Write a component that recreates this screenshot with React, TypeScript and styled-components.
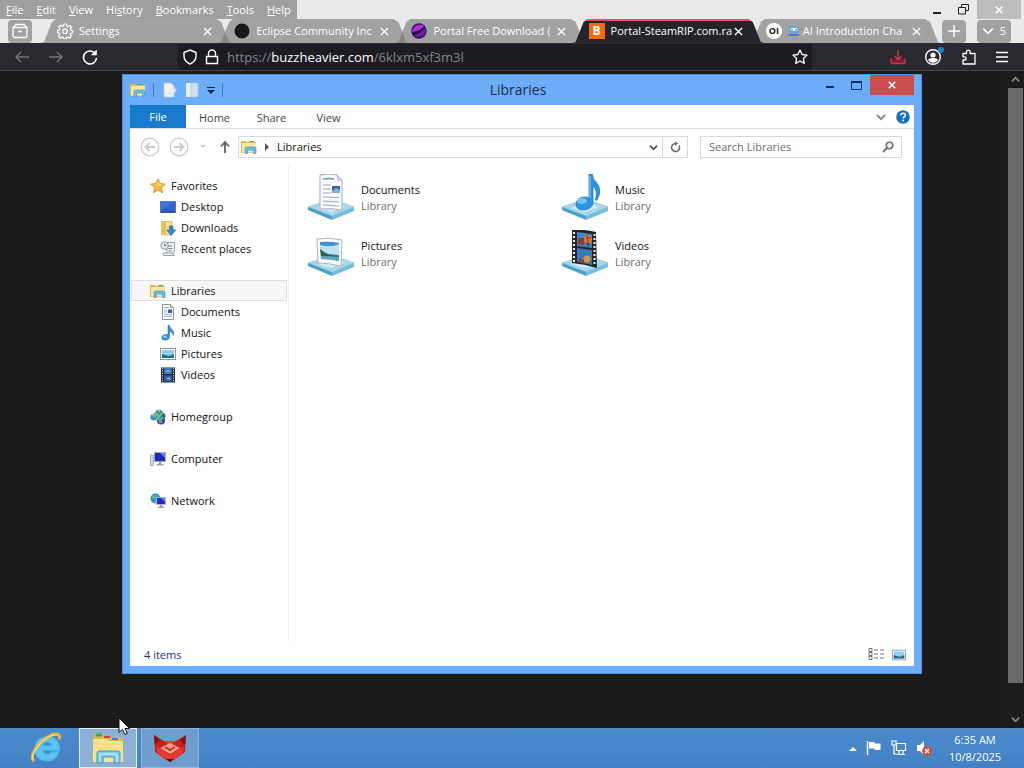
import React from "react";
import styled, { createGlobalStyle } from "styled-components";

const GlobalStyle = createGlobalStyle`
  *, *::before, *::after { box-sizing: border-box; }
  body { margin: 0; background: #1b1b1b; }
  body, button, input { font-family: "Open Sans", "Noto Sans", sans-serif; font-size: 11px; line-height: 16px; }
  button { padding: 0; border: 0; background: none; color: inherit; display: flex; align-items: center; justify-content: center; }
  a { color: inherit; text-decoration: none; }
  svg { display: block; flex: none; }
`;

const Desktop = styled.div`
  display: flex;
  flex-direction: column;
  min-height: 100vh;
`;

/* ---------- Browser ---------- */

const TopBar = styled.header`
  display: flex;
  justify-content: space-between;
  height: 19px;
  background: #eaeaea;
`;
const MenuBar = styled.nav`
  display: flex;
  align-items: center;
  gap: 13px;
  padding: 0 6px;
  background: #9f9f9f;
  color: #fff;
`;
const MenuItem = styled.button`
  height: 100%;
`;
const Mnemonic = styled.span`
  text-decoration: underline;
`;
const WindowButtons = styled.div`
  display: flex;
  padding-right: 3px;
`;
const WindowButton = styled.button<{ $w: number; $fill?: string }>`
  width: ${(p) => p.$w}px;
  height: 100%;
  background: ${(p) => p.$fill ?? "none"};
`;

const TabRow = styled.div`
  display: flex;
  align-items: center;
  height: 24px;
  padding: 0 13px 0 8px;
  background: #eaeaea;
`;
const GrayButton = styled.button<{ $w: number }>`
  width: ${(p) => p.$w}px;
  height: 23px;
  gap: 6px;
  border-radius: 4px;
  background: #a2a2a2;
  color: #fff;
`;
const TabTools = styled.div`
  display: flex;
  gap: 11px;
`;
const TabStrip = styled.div`
  display: flex;
  flex: 1;
  height: 100%;
  min-width: 0;
  margin: 0 15px 0 9px;
`;
const TabBox = styled.div<{ $active?: boolean }>`
  position: relative;
  z-index: ${(p) => (p.$active ? 1 : 0)};
  display: flex;
  flex: 1;
  align-items: center;
  min-width: 0;
  padding-left: 16px;
  color: #fff;
  &::before {
    content: "";
    position: absolute;
    z-index: -1;
    inset: 0 -14px 0 0;
    clip-path: polygon(0 100%, 3px 96%, 11px 12%, 15px 0, calc(100% - 16px) 0, calc(100% - 11px) 12%, calc(100% - 3px) 96%, 100% 100%);
    background: ${(p) => (p.$active ? "#25242b" : "rgba(120, 120, 120, 0.64)")};
    border-top: ${(p) => (p.$active ? "2px solid #e0526a" : "0")};
  }
`;
const TabLabel = styled.a`
  flex: 1;
  display: flex;
  align-items: center;
  gap: 3px;
  min-width: 0;
  margin-left: 6px;
  overflow: hidden;
  white-space: nowrap;
`;
const TabClose = styled.button`
  width: 14px;
  margin-right: 4px;
`;

const NavBar = styled.div`
  display: flex;
  align-items: center;
  height: 28px;
  padding: 0 14px;
  background: #2a2930;
  border-bottom: 1px solid #45454b;
  color: #fbfbfe;
`;
const NavGroup = styled.div<{ $gap: number }>`
  display: flex;
  align-items: center;
  gap: ${(p) => p.$gap}px;
`;
const UrlBar = styled.div`
  display: flex;
  flex: 1;
  align-items: center;
  gap: 6px;
  height: 26px;
  margin: 0 77px 0 80px;
  padding: 0 4px;
  background: #1d1c22;
  border-radius: 3px;
`;
const UrlText = styled.div`
  flex: 1;
  padding-left: 1px;
  font-size: 13px;
  color: #85848c;
`;
const UrlHost = styled.span`
  color: #fbfbfe;
`;

const Page = styled.main`
  position: relative;
  display: flex;
  flex: 1;
  justify-content: flex-end;
  min-height: 500px;
  background: #1b1b1b;
`;
const Scroller = styled.div`
  display: flex;
  flex-direction: column;
  align-items: center;
  width: 17px;
  background: #1c1c1c;
  color: #8a8a8a;
`;
const ScrollArrow = styled.button`
  width: 17px;
  height: 17px;
`;
const ScrollThumb = styled.div`
  flex: 1;
  width: 15px;
  margin-bottom: 28px;
  background: #6b6b6b;
`;

/* ---------- Explorer window ---------- */

const Explorer = styled.section`
  position: absolute;
  inset: 3px 102px 54px 122px;
  display: flex;
  flex-direction: column;
  padding: 0 7px 7px;
  background: #6badf8;
  border: 1px solid #4e8fda;
`;
const TitleBar = styled.header`
  display: grid;
  grid-template-columns: 1fr auto 1fr;
  height: 30px;
`;
const QuickAccess = styled.div`
  display: flex;
  align-items: center;
  gap: 7px;
`;
const Divider = styled.span`
  width: 1px;
  height: 14px;
  background: #3f78b8;
`;
const WindowTitle = styled.h1`
  margin: 0;
  padding-right: 8px;
  align-self: center;
  font-size: 14px;
  font-weight: 400;
  line-height: 20px;
  color: #1b2d4a;
`;
const Caption = styled.div`
  display: flex;
  justify-content: flex-end;
`;
const CaptionButton = styled.button<{ $w: number; $close?: boolean }>`
  width: ${(p) => p.$w}px;
  height: 20px;
  background: ${(p) => (p.$close ? "#c9504f" : "none")};
`;
const Client = styled.div`
  display: flex;
  flex: 1;
  flex-direction: column;
  min-height: 0;
  background: #fff;
`;
const Ribbon = styled.nav`
  display: flex;
  height: 24px;
  border-bottom: 1px solid #dadbdc;
  color: #444;
`;
const RibbonTab = styled.button<{ $file?: boolean }>`
  width: ${(p) => (p.$file ? 56 : 57)}px;
  padding-top: ${(p) => (p.$file ? 0 : 2)}px;
  background: ${(p) => (p.$file ? "#1979ca" : "none")};
  color: ${(p) => (p.$file ? "#fff" : "inherit")};
`;
const RibbonEnd = styled.div`
  display: flex;
  align-items: center;
  gap: 10px;
  margin-left: auto;
  padding-right: 4px;
`;
const AddressRow = styled.div`
  display: flex;
  align-items: center;
  height: 36px;
  padding: 0 12px 0 10px;
`;
const History = styled.div`
  display: flex;
  align-items: center;
  gap: 9px;
  width: 98px;
`;
const AddressBox = styled.div`
  display: flex;
  flex: 1;
  align-items: center;
  height: 22px;
  border: 1px solid #d9d9d9;
  color: #111;
`;
const Crumb = styled.a`
  display: flex;
  flex: 1;
  align-items: center;
  gap: 7px;
  padding-left: 2px;
`;
const BoxButton = styled.button<{ $split?: boolean }>`
  width: ${(p) => (p.$split ? 25 : 18)}px;
  height: 20px;
  border-left: ${(p) => (p.$split ? "1px solid #d9d9d9" : "0")};
`;
const SearchBox = styled.label`
  display: flex;
  align-items: center;
  width: 202px;
  height: 22px;
  margin-left: 12px;
  padding: 0 7px 0 8px;
  border: 1px solid #d9d9d9;
`;
const SearchInput = styled.input`
  flex: 1;
  min-width: 0;
  padding: 0;
  border: 0;
  outline: 0;
  background: none;
  &::placeholder { color: #6d6d6d; opacity: 1; }
`;
const Body = styled.div`
  display: flex;
  flex: 1;
  min-height: 0;
`;
const Tree = styled.nav`
  width: 159px;
  padding-top: 10px;
  border-right: 1px solid #f2f2f2;
`;
const TreeGroup = styled.div`
  margin-bottom: 21px;
`;
const TreeItem = styled.a<{ $child?: boolean; $selected?: boolean }>`
  display: flex;
  align-items: center;
  gap: 5px;
  height: 21px;
  margin: 0 1px;
  padding-left: ${(p) => (p.$child ? 29 : 19)}px;
  color: #111;
  background: ${(p) => (p.$selected ? "#f7f7f7" : "none")};
  box-shadow: ${(p) => (p.$selected ? "inset 0 0 0 1px #dedede" : "none")};
`;
const Items = styled.div`
  display: grid;
  flex: 1;
  grid-template-columns: repeat(auto-fill, 254px);
  grid-auto-rows: 56px;
  align-content: start;
  padding: 5px 0 0 18px;
`;
const Item = styled.a`
  display: flex;
  align-items: center;
  gap: 6px;
  color: #111;
`;
const ItemKind = styled.span`
  display: block;
  color: #6d6d6d;
`;
const StatusBar = styled.footer`
  display: flex;
  align-items: center;
  gap: 8px;
  height: 24px;
  padding: 1px 8px 0 14px;
  color: #1e3287;
`;
const Count = styled.span`
  flex: 1;
`;

/* ---------- Taskbar ---------- */

const Taskbar = styled.footer`
  display: flex;
  align-items: stretch;
  height: 40px;
  padding-left: 17px;
  background: linear-gradient(#4a8bcc, #4481c4);
  color: #fff;
`;
const TaskButton = styled.button<{ $state?: "open" | "focus" }>`
  width: 58px;
  margin-right: 4px;
  background: ${(p) => (p.$state === "focus" ? "#8db0d4" : p.$state === "open" ? "#6f9dce" : "none")};
  border: ${(p) => (p.$state === "focus" ? "1px solid #e6f0f8" : p.$state === "open" ? "1px solid #8fb6de" : "0")};
`;
const Tray = styled.div`
  display: flex;
  align-items: center;
  gap: 9px;
  margin-left: auto;
`;
const Clock = styled.time`
  width: 83px;
  padding-right: 15px;
  text-align: center;
  line-height: 17px;
`;
const Pointer = styled.svg`
  position: absolute;
  z-index: 5;
  left: 118px;
  bottom: -8px;
`;

/* ---------- Drawings ---------- */

const Cross = ({ s = 9, c = "#fff", w = 1.5 }: { s?: number; c?: string; w?: number }) => (
  <svg width={s} height={s} viewBox="0 0 10 10" stroke={c} strokeWidth={w} fill="none">
    <path d="M1 1l8 8M9 1l-8 8" />
  </svg>
);
const Chevron = ({ up, c = "currentColor", s = 9, w = 2 }: { up?: boolean; c?: string; s?: number; w?: number }) => (
  <svg width={s} height={s} viewBox="0 0 10 10" stroke={c} strokeWidth={w} fill="none">
    <path d={up ? "M1 7l4-4 4 4" : "M1 3l4 4 4-4"} />
  </svg>
);
const Arrow = ({ right }: { right?: boolean }) => (
  <svg width="16" height="16" viewBox="0 0 16 16" stroke="#77767d" strokeWidth="1.4" fill="none">
    <path d={right ? "M1 8h13M9 3l5 5-5 5" : "M15 8H2M7 3L2 8l5 5"} />
  </svg>
);
const RoundArrow = ({ right }: { right?: boolean }) => (
  <svg width="20" height="20" viewBox="0 0 20 20" stroke="#cbcbcb" fill="none">
    <circle cx="10" cy="10" r="8.800" strokeWidth="1.200" />
    <path strokeWidth="2" d={right ? "M5 10h9M10.500 6l4 4-4 4" : "M15 10H6M9.500 6l-4 4 4 4"} />
  </svg>
);
const Gear = () => (
  <svg width="16" height="16" viewBox="0 0 16 16" fill="none" stroke="#fff" strokeWidth="1.200" strokeLinejoin="round">
    <path d="M6.700 1h2.600l.4 2 1.300.6 1.800-1.200 1.800 1.800-1.200 1.800.6 1.300 1.500.3v2.300l-1.700.4-.6 1.300 1.200 1.700-1.800 1.800-1.700-1.100-1.300.5-.4 1.500H6.800l-.4-1.500-1.300-.5-1.700 1.100-1.800-1.800 1.100-1.700-.5-1.300L.6 9.700V7.300l1.700-.3.5-1.300-1.200-1.700 1.800-1.800 1.800 1.200 1.200-.5z" />
    <circle cx="8" cy="8.200" r="2.300" />
  </svg>
);
const DarkBall = () => (
  <svg width="16" height="16" viewBox="0 0 16 16"><circle cx="8" cy="8" r="7.500" fill="#191919" /></svg>
);
const PurpleBall = () => (
  <svg width="16" height="16" viewBox="0 0 16 16">
    <circle cx="8" cy="8" r="7.700" fill="#3a1060" />
    <path d="M1 9C2 3 8 0 13 3c1 1-4 5-12 6z" fill="#b32fd0" />
    <path d="M2 12c5 0 9-3 12-7 3 6-4 12-12 7z" fill="#6d1f9c" />
    <path d="M1.500 11Q8 10 13.500 4" stroke="#1c0633" strokeWidth="1.500" fill="none" />
  </svg>
);
const BadgeB = styled.span`
  width: 16px;
  height: 16px;
  background: #f26a12;
  color: #fff;
  font-size: 12px;
  font-weight: 700;
  text-align: center;
`;
const BadgeOI = styled.span`
  width: 16px;
  height: 16px;
  border-radius: 8px;
  background: #fff;
  color: #111;
  font-size: 9px;
  font-weight: 700;
  text-align: center;
`;
const Robot = () => (
  <svg width="12" height="12" viewBox="0 0 12 12">
    <rect x="1" y="1" width="10" height="7" rx="2" fill="#5fa5e2" />
    <rect x="2.500" y="3" width="7" height="3" rx="1" fill="#e8f4ff" />
    <path d="M4 4v1.500M8 4v1.500" stroke="#2a5688" />
    <path d="M1 10h10" stroke="#3f84cc" strokeWidth="2" />
  </svg>
);

const LibraryFolder = () => (
  <svg width="16" height="16" viewBox="0 0 16 16">
    <path d="M0 2h5l1 1h9v11H0z" fill="#dfb852" />
    <path d="M1 4h14v9.500H1z" fill="#f7e79f" />
    <path d="M8 2.500h5" stroke="#5ba85a" />
    <path d="M4 14.500V9.500q0-1.500 1.500-1.500h8q1.500 0 1.500 1.500v5h-2.500V11H6.500v3.500z" fill="#6cc0e4" stroke="#3c8fbc" strokeWidth=".6" />
  </svg>
);
const Star = () => (
  <svg width="16" height="16" viewBox="0 0 16 16">
    <path d="M8 .8l2.200 4.700 5.200.6-3.900 3.500 1.100 5.200L8 12.200l-4.600 2.600 1.100-5.200L.6 6.100l5.200-.6z" fill="#fbbb3c" stroke="#dd8a1c" strokeWidth=".8" />
    <path d="M8 3l1.400 3.300 3 .3L8 8z" fill="#ffe08a" />
  </svg>
);
const DesktopIcon = () => (
  <svg width="16" height="16" viewBox="0 0 16 16">
    <rect x=".5" y="2.500" width="15" height="11" fill="#2f62cf" stroke="#5a78b4" />
    <path d="M1 3h14L1 11z" fill="#3f74dc" />
    <path d="M1 13h14" stroke="#1b3478" />
  </svg>
);
const DownloadsIcon = () => (
  <svg width="16" height="16" viewBox="0 0 16 16">
    <path d="M1 1h5l1 1v13H1z" fill="#e9c559" />
    <path d="M5 1.500h7V15H5z" fill="#f6dd86" stroke="#cda63e" strokeWidth=".6" />
    <path d="M9.500 6h3.500v4h2.800L11.200 15.500 6.700 10h2.800z" fill="#2d8be0" stroke="#1b63ae" strokeWidth=".6" />
  </svg>
);
const RecentIcon = () => (
  <svg width="16" height="16" viewBox="0 0 16 16" fill="#eef2f2" stroke="#8b9b9b" strokeWidth=".9">
    <path d="M5 1.500h9.500V11H13v3H7V8H5z" />
    <path d="M3 12h9q1 2.500 2.500 2.500H4Q2.500 14 3 12z" />
    <circle cx="4.500" cy="4.500" r="3.800" fill="#d9ecdf" />
    <path d="M4.500 2.500v2h2M8 5h4M8.500 7.500h4M8.500 10h3" fill="none" stroke="#5c7a80" />
  </svg>
);
const DocIcon = () => (
  <svg width="16" height="16" viewBox="0 0 16 16">
    <path d="M2.500.5h8l3 3v12h-11z" fill="#fff" stroke="#8a9399" />
    <path d="M10.500.5v3h3" fill="#e3e7ea" stroke="#8a9399" />
    <path d="M4 3.500h5M4 6h3M4 8h3M4 10.500h8M4 12.500h8" stroke="#8fb0cc" />
    <rect x="8" y="5.500" width="4" height="3.500" fill="#2f5f9e" />
  </svg>
);
const MusicIcon = () => (
  <svg width="16" height="16" viewBox="0 0 16 16">
    <path d="M8 .5h1.500q.5 2.500 2.500 4 2.800 2.500 1.200 6-.3-3-3.700-4.500v6q-.3 3-4 3.200-3.700 0-3.800-2.500.3-3 4-3.200H8z" fill="#2f97dc" stroke="#1766a8" strokeWidth=".5" />
    <ellipse cx="5" cy="11.800" rx="2" ry="1.200" fill="#7fcbf5" />
  </svg>
);
const PictureIcon = ({ w = 16 }: { w?: number }) => (
  <svg width={w} height={w} viewBox="0 0 16 16">
    <rect x=".5" y="2.500" width="15" height="11" fill="#fff" stroke="#8d979d" />
    <rect x="2" y="4" width="12" height="8" fill="#8fd0ee" />
    <path d="M2 8l3 1 4 1 5-2v4H2z" fill="#236d86" />
  </svg>
);
const VideoIcon = () => (
  <svg width="16" height="16" viewBox="0 0 16 16">
    <rect x="1" y=".5" width="14" height="15" fill="#232a36" />
    <path d="M2.500 1v14M13.500 1v14" stroke="#d5dde4" strokeDasharray="1.200 1.200" />
    <rect x="4" y="1" width="8" height="6" fill="#3d76bd" />
    <rect x="4" y="8.500" width="8" height="6" fill="#2c60a2" />
    <path d="M6 5l2-3 2 3zM6 12l3-2 2 3z" fill="#8ab4df" />
  </svg>
);
const HomegroupIcon = () => (
  <svg width="16" height="16" viewBox="0 0 16 16">
    <circle cx="4" cy="8" r="3.600" fill="#4a86c6" />
    <circle cx="9" cy="4.500" r="3.800" fill="#3c8f86" />
    <circle cx="12.500" cy="7" r="3" fill="#2f5cc4" />
    <circle cx="11" cy="11.500" r="4" fill="#33489e" />
    <path d="M3 8l4-3 2 3 4-5M6 9l4 2 3-3" stroke="#63c07c" fill="none" strokeWidth="2.200" />
    <path d="M2 6l2-1M8 2l2 0M9 13l3 0" stroke="#cfe6fa" />
  </svg>
);
const ComputerIcon = () => (
  <svg width="16" height="16" viewBox="0 0 16 16">
    <rect x=".5" y="4" width="3" height="10.500" fill="#d5dbe0" stroke="#8b959d" strokeWidth=".7" />
    <rect x="4.500" y="1.500" width="11" height="9" fill="#1e2bb2" stroke="#a2aac8" />
    <path d="M10 2h5v5z" fill="#6d7ff0" />
    <path d="M8.500 11h3v2h2v1.500h-7V13h2z" fill="#9aa2b2" />
  </svg>
);
const NetworkIcon = () => (
  <svg width="16" height="16" viewBox="0 0 16 16">
    <circle cx="5.500" cy="5.500" r="5" fill="#2f8fc6" />
    <path d="M2 3q3-2 5-1L5 5 2 6zM3 8l4 0-1 2z" fill="#58c07c" />
    <rect x="6.500" y="4.500" width="9" height="7" fill="#1c2fbe" stroke="#a9b6de" />
    <path d="M11 5h4v4z" fill="#6485f0" />
    <path d="M10 12h2v1.500h2V15H8v-1.500h2z" fill="#98a2b6" />
  </svg>
);

const LibraryArt = ({ children }: { children: React.ReactNode }) => (
  <svg width="48" height="48" viewBox="0 3 48 48">
    <path d="M1 36L25 28l22 8-22 9z" fill="#a9d7ea" stroke="#7fbfdb" strokeWidth=".6" />
    <path d="M1 36l24 9v4L1 39z" fill="#4c9fc8" />
    <path d="M47 36l-22 9v4l22-9z" fill="#74bcdb" />
    <path d="M10 37l16-5 12 4-14 5z" fill="#d2ecf6" />
    {children}
  </svg>
);
const BigDoc = () => (
  <LibraryArt>
    <path d="M13 4q9-2 17 0l5 5v30q-11-2-22-1z" fill="#f8f9fc" stroke="#a9abc0" />
    <path d="M30 4l1 6 4-1z" fill="#d3d6e2" stroke="#a9abc0" strokeWidth=".5" />
    <path d="M16 8q6-1 11 0" stroke="#5fa29a" strokeWidth="1.500" fill="none" />
    <path d="M16 14h8M16 18h8M16 22h8M16 26l16 .5M16 30l16 1M16 34l16 1" stroke="#a3a6b8" />
    <rect x="25" y="15" width="8" height="7" fill="#3d6595" />
    <path d="M25 20l4-3 4 2v3h-8z" fill="#7fb0d8" />
  </LibraryArt>
);
const BigMusic = () => (
  <LibraryArt>
    <path d="M28 3h3.500q0 5 3.500 8 7 8 1 18-1 1-1.500 0Q37 19 32 15v17q-1 6-9 7-8 0-8-6 1-7 9-7 3 0 4 1z" fill="#2e94e2" stroke="#1b6fbc" strokeWidth=".7" />
    <ellipse cx="21" cy="30" rx="5" ry="3" fill="#74c3f5" />
    <path d="M29 5v22" stroke="#8dd0fa" />
  </LibraryArt>
);
const BigPicture = () => (
  <LibraryArt>
    <path d="M10 12q12-2 25 1l-1 26q-12-3-23-3z" fill="#fafcfd" stroke="#a9b4bc" />
    <path d="M13 15q10-1 19 1v18q-9-2-18-2z" fill="#3f8fd3" />
    <path d="M13 18q10 3 19-1v11l-18-2z" fill="#bfe3f4" />
    <path d="M13 22q5 4 10 6l9 1v1q-10 1-18-1z" fill="#2c6444" />
    <path d="M14 29q9 0 18 1v4q-9-2-18-2z" fill="#5aa6c4" />
  </LibraryArt>
);
const BigVideo = () => (
  <LibraryArt>
    <path d="M11 3q12-1 24 2l1 36q-13-4-25-5z" fill="#272523" />
    <path d="M13 5v30M33.500 7v32" stroke="#eef1f3" strokeWidth="2" strokeDasharray="2 2" />
    <path d="M16 5l15 2v14l-15-2z" fill="#3f83c8" />
    <path d="M16 21l15 2v15l-15-3z" fill="#3578c0" />
    <path d="M17 11h6v7l-6-1z" fill="#93392f" />
    <circle cx="27" cy="12" r="4" fill="#df7a2c" />
    <path d="M25 11h5M26 8l1 8" stroke="#7b3a2a" />
    <path d="M25 16h4l-1 3h-2z" fill="#7b3a2a" />
    <circle cx="26" cy="32" r="3.500" fill="#d99a34" />
    <path d="M18 32l5 1v3l-5-1z" fill="#a4352b" />
  </LibraryArt>
);

/* ---------- Content ---------- */

const menu = [
  ["", "F", "ile"], ["", "E", "dit"], ["", "V", "iew"], ["Hi", "s", "tory"],
  ["", "B", "ookmarks"], ["", "T", "ools"], ["", "H", "elp"],
];
const tabs = [
  { icon: <Gear />, text: "Settings" },
  { icon: <DarkBall />, text: "Eclipse Community Inc" },
  { icon: <PurpleBall />, text: "Portal Free Download (" },
  { icon: <BadgeB>B</BadgeB>, text: "Portal-SteamRIP.com.ra", active: true },
  { icon: <BadgeOI>OI</BadgeOI>, text: "AI Introduction Cha", extra: <Robot /> },
];
const tree = [
  { icon: <Star />, text: "Favorites", children: [
    { icon: <DesktopIcon />, text: "Desktop" },
    { icon: <DownloadsIcon />, text: "Downloads" },
    { icon: <RecentIcon />, text: "Recent places" },
  ] },
  { icon: <LibraryFolder />, text: "Libraries", selected: true, children: [
    { icon: <DocIcon />, text: "Documents" },
    { icon: <MusicIcon />, text: "Music" },
    { icon: <PictureIcon />, text: "Pictures" },
    { icon: <VideoIcon />, text: "Videos" },
  ] },
  { icon: <HomegroupIcon />, text: "Homegroup", children: [] },
  { icon: <ComputerIcon />, text: "Computer", children: [] },
  { icon: <NetworkIcon />, text: "Network", children: [] },
];
const libraries = [
  { icon: <BigDoc />, text: "Documents" },
  { icon: <BigMusic />, text: "Music" },
  { icon: <BigPicture />, text: "Pictures" },
  { icon: <BigVideo />, text: "Videos" },
];

function BrowserChrome() {
  return (
    <>
      <TopBar>
        <MenuBar aria-label="Menu">
          {menu.map(([pre, key, post]) => (
            <MenuItem key={key + post}><span>{pre}<Mnemonic>{key}</Mnemonic>{post}</span></MenuItem>
          ))}
        </MenuBar>
        <WindowButtons>
          <WindowButton $w={26} aria-label="Minimize">
            <svg width="10" height="10"><path d="M1 8h8" stroke="#222" strokeWidth="2" /></svg>
          </WindowButton>
          <WindowButton $w={27} aria-label="Restore">
            <svg width="11" height="11" fill="none" stroke="#222"><path d="M3.500 3V.5h7v6H8M.5 3.500h7v6.500h-7z" /></svg>
          </WindowButton>
          <WindowButton $w={44} $fill="#bdbdbd" aria-label="Close"><Cross s={8} w={2} /></WindowButton>
        </WindowButtons>
      </TopBar>
      <TabRow>
        <GrayButton $w={24} aria-label="Recent tabs">
          <svg width="16" height="16" viewBox="0 0 16 16" fill="none" stroke="#fff" strokeWidth="1.300">
            <path d="M3 1.500h10M1 4.500h14v8q0 2-2 2H3q-2 0-2-2zM1 6l2-4M15 6l-2-4M6 8.500h4" />
          </svg>
        </GrayButton>
        <TabStrip>
          {tabs.map((t) => (
            <TabBox key={t.text} $active={t.active}>
              {t.icon}
              <TabLabel href="#">{t.extra}{t.text}</TabLabel>
              <TabClose aria-label="Close tab"><Cross /></TabClose>
            </TabBox>
          ))}
        </TabStrip>
        <TabTools>
          <GrayButton $w={24} aria-label="New tab">
            <svg width="12" height="12" stroke="#fff" strokeWidth="1.500"><path d="M6 0v12M0 6h12" /></svg>
          </GrayButton>
          <GrayButton $w={34}><Chevron s={12} w={1.3} />5</GrayButton>
        </TabTools>
      </TabRow>
      <NavBar>
        <NavGroup $gap={18}>
          <button aria-label="Back"><Arrow /></button>
          <button aria-label="Forward"><Arrow right /></button>
          <button aria-label="Reload">
            <svg width="16" height="16" viewBox="0 0 16 16" fill="none" stroke="#fff" strokeWidth="1.600">
              <path d="M13.500 5A6.500 6.500 0 1 0 14.500 9" /><path d="M14.500 1v5h-5z" fill="#fff" strokeWidth=".6" />
            </svg>
          </button>
        </NavGroup>
        <UrlBar>
          <svg width="16" height="16" viewBox="0 0 16 16" fill="none" stroke="#fff" strokeWidth="1.400">
            <path d="M8 1l6 2.500v3.500c0 4-2.500 6.500-6 8-3.500-1.500-6-4-6-8V3.500z" />
          </svg>
          <svg width="16" height="16" viewBox="0 0 16 16" fill="none" stroke="#fff" strokeWidth="1.400">
            <path d="M2.500 7.500h11v7h-11zM4.500 7V4.500a3.500 3.500 0 0 1 7 0V7" />
          </svg>
          <UrlText role="textbox" aria-label="Address" tabIndex={0}>https://<UrlHost>buzzheavier.com</UrlHost>/6klxm5xf3m3l</UrlText>
          <button aria-label="Bookmark">
            <svg width="16" height="16" viewBox="0 0 16 16" fill="none" stroke="#fff" strokeWidth="1.300" strokeLinejoin="round">
              <path d="M8 1l2.100 4.500 4.900.6-3.600 3.400.9 4.900L8 12l-4.300 2.400.9-4.900L1 6.100l4.900-.6z" />
            </svg>
          </button>
        </UrlBar>
        <NavGroup $gap={17}>
          <button aria-label="Downloads">
            <svg width="18" height="16" viewBox="0 0 18 16" fill="none" stroke="#c7374f" strokeWidth="1.400">
              <path d="M3 9.500h12v4.500H3z" fill="#7a1f33" stroke="none" />
              <path d="M9 1v9M5.500 7L9 10.500 12.500 7M2 9v4q0 1.500 1.500 1.500h11Q16 14.500 16 13V9" />
            </svg>
          </button>
          <button aria-label="Account">
            <svg width="20" height="20" viewBox="0 0 20 20">
              <circle cx="9" cy="10" r="7.300" fill="none" stroke="#fff" strokeWidth="1.400" />
              <circle cx="9" cy="8" r="2.600" fill="#fff" /><path d="M4 13q1-2 5-2t5 2q-2 3-5 3t-5-3z" fill="#fff" />
              <circle cx="17" cy="3" r="3" fill="#1187d8" />
            </svg>
          </button>
          <button aria-label="Extensions">
            <svg width="16" height="16" viewBox="0 0 16 16" fill="none" stroke="#fff" strokeWidth="1.300" strokeLinejoin="round">
              <path d="M2 4.500h3.500V3a1.800 1.800 0 0 1 3.600 0v1.500H14V15H2v-4h1.500a1.600 1.600 0 0 0 0-3.200H2z" />
            </svg>
          </button>
          <button aria-label="Application menu">
            <svg width="16" height="16" stroke="#fff" strokeWidth="1.300"><path d="M2 3.500h12M2 8h12M2 12.500h12" /></svg>
          </button>
        </NavGroup>
      </NavBar>
    </>
  );
}

function ExplorerWindow() {
  return (
    <Explorer aria-label="Libraries">
      <TitleBar>
        <QuickAccess>
          <LibraryFolder />
          <Divider />
          <svg width="16" height="16" viewBox="0 0 16 16">
            <path d="M3 1h7l3 3v11H3z" fill="#edf3f8" stroke="#b7c8da" strokeWidth=".7" />
            <path d="M7 10l3 3 5-6" stroke="#dde7f2" strokeWidth="2.500" fill="none" />
          </svg>
          <svg width="16" height="16" viewBox="0 0 16 16">
            <path d="M2 1h5v14H2z" fill="#e7eef4" /><path d="M7 1h7v14H7z" fill="#cfdfee" stroke="#a9c3dd" strokeWidth=".6" />
          </svg>
          <svg width="8" height="8"><path d="M0 1.500h8" stroke="#10254b" /><path d="M0 4h8l-4 4z" fill="#10254b" /></svg>
          <Divider />
        </QuickAccess>
        <WindowTitle>Libraries</WindowTitle>
        <Caption>
          <CaptionButton $w={26} aria-label="Minimize"><svg width="8" height="8"><path d="M0 6h8" stroke="#0c2c5c" strokeWidth="2" /></svg></CaptionButton>
          <CaptionButton $w={27} aria-label="Maximize"><svg width="11" height="9"><path d="M.5 1v7.500h10V1" fill="none" stroke="#0c2c5c" /><path d="M0 1h11" stroke="#0c2c5c" strokeWidth="2" /></svg></CaptionButton>
          <CaptionButton $w={44} $close aria-label="Close"><Cross s={8} w={2} /></CaptionButton>
        </Caption>
      </TitleBar>
      <Client>
        <Ribbon>
          <RibbonTab $file>File</RibbonTab>
          <RibbonTab>Home</RibbonTab>
          <RibbonTab>Share</RibbonTab>
          <RibbonTab>View</RibbonTab>
          <RibbonEnd>
            <button aria-label="Expand the ribbon"><Chevron c="#8a8a8a" s={10} /></button>
            <button aria-label="Help">
              <svg width="14" height="14" viewBox="0 0 14 14">
                <circle cx="7" cy="7" r="6.800" fill="#1b6fc0" />
                <path d="M4.800 5.400q0-2.200 2.300-2.200t2.300 2q0 1-1.300 1.800-1 .6-1 1.500" stroke="#fff" strokeWidth="1.500" fill="none" />
                <circle cx="7.100" cy="10.600" r="1" fill="#fff" />
              </svg>
            </button>
          </RibbonEnd>
        </Ribbon>
        <AddressRow>
          <History>
            <button aria-label="Back"><RoundArrow /></button>
            <button aria-label="Forward"><RoundArrow right /></button>
            <svg width="10" height="6"><path d="M2 1h6L5 4z" fill="#cfcfcf" /></svg>
            <button aria-label="Up">
              <svg width="14" height="14" viewBox="0 0 14 14" fill="none" stroke="#606060" strokeWidth="1.800"><path d="M8 13V2M4 6.500l4-4.500 4 4.500" /></svg>
            </button>
          </History>
          <AddressBox>
            <Crumb href="#">
              <LibraryFolder />
              <svg width="6" height="8"><path d="M1 0l4 4-4 4z" fill="#555" /></svg>
              Libraries
            </Crumb>
            <BoxButton aria-label="Previous locations"><Chevron c="#555" /></BoxButton>
            <BoxButton $split aria-label="Refresh">
              <svg width="11" height="12" viewBox="0 0 11 12" fill="none" stroke="#6b6b6b" strokeWidth="1.600"><path d="M9 4.500A4 4 0 1 1 5.500 2.500" /><path d="M5 0l3 2.500L5 5z" fill="#6b6b6b" stroke="none" /></svg>
            </BoxButton>
          </AddressBox>
          <SearchBox>
            <SearchInput type="search" aria-label="Search Libraries" placeholder="Search Libraries" />
            <svg width="12" height="12" fill="none" stroke="#707070"><circle cx="7.500" cy="4.500" r="3.200" strokeWidth="1.600" /><path d="M5 7l-4 4" strokeWidth="2" /></svg>
          </SearchBox>
        </AddressRow>
        <Body>
          <Tree>
            {tree.map((g) => (
              <TreeGroup key={g.text}>
                <TreeItem href="#" $selected={g.selected}>{g.icon}{g.text}</TreeItem>
                {g.children.map((c) => (
                  <TreeItem href="#" key={c.text} $child>{c.icon}{c.text}</TreeItem>
                ))}
              </TreeGroup>
            ))}
          </Tree>
          <Items>
            {libraries.map((l) => (
              <Item href="#" key={l.text}>{l.icon}<span>{l.text}<ItemKind>Library</ItemKind></span></Item>
            ))}
          </Items>
        </Body>
        <StatusBar>
          <Count>4 items</Count>
          <button aria-label="Details view">
            <svg width="16" height="13" fill="none" stroke="#6f7680"><path d="M1 .5h3v3H1zM1 4.500h3v3H1zM1 8.500h3v3H1z" /><path d="M6 2h4M12 2h4M6 6h4M12 6h4M6 10h4M12 10h4" /></svg>
          </button>
          <button aria-label="Large icons view"><PictureIcon w={14} /></button>
        </StatusBar>
      </Client>
    </Explorer>
  );
}

function WindowsTaskbar() {
  return (
    <Taskbar>
      <TaskButton aria-label="Internet Explorer">
        <svg width="32" height="32" viewBox="0 0 32 32" fill="none">
          <path fillRule="evenodd" fill="#5cc4f0" stroke="#4fbdee" strokeWidth="1.400" d="M17.500 5c7.500 0 12 5 12 13H12.500c.4 3 2.500 4.500 5 4.500 2 0 3.600-.8 4.500-2.500h6.500c-1.500 5.500-6 8.500-11.500 8.500C10 28.500 5 24 5 17S10 5 17.500 5zM12.500 14h9.500c-.3-2.700-2-4.200-4.700-4.200s-4.500 1.500-4.800 4.200z" />
          <path d="M7.500 15Q9 8 17 7" stroke="#c3effd" strokeWidth="2" />
          <path d="M4 29.500Q-1 25 8 13.500 20 0 28.500 2.500q2 1.500.5 5" stroke="#e5b233" strokeWidth="3" />
          <path d="M3.500 28.500Q0 24 8.500 13.500 19 1.500 28 3" stroke="#fbe07a" strokeWidth="1.200" />
        </svg>
      </TaskButton>
      <TaskButton $state="focus" aria-label="File Explorer">
        <svg width="34" height="32" viewBox="0 0 34 32">
          <path d="M2 4l2-2h8l2 3h18v22H2z" fill="#dcb64e" />
          <path d="M5 3h6" stroke="#45a455" strokeWidth="3" /><path d="M13 5h6" stroke="#cf3e3e" strokeWidth="2" /><path d="M21 7h6" stroke="#3a80cf" strokeWidth="2" />
          <path d="M2 7h14l2 2h14v21H2z" fill="#f6e48f" />
          <path d="M2 12h30M2 16h30" stroke="#eed77a" />
          <path d="M6 31V21q0-2 2-2h19q2 0 2 2v10h-6v-6H12v6z" fill="#7ccbea" stroke="#3f96c4" />
          <path d="M9 30v-8h17v8" stroke="#d4f0fa" fill="none" />
        </svg>
      </TaskButton>
      <TaskButton $state="open" aria-label="Browser">
        <svg width="34" height="28" viewBox="0 0 34 28">
          <path d="M1 1l10 6h12l10-6-1 17-10 7-5 3-5-3-10-7z" fill="#c9201f" />
          <path d="M1 1l6 5-5 5zM33 1l-6 5 5 5z" fill="#7d1716" />
          <path d="M11 7h12l-6 5z" fill="#e23a30" />
          <path d="M3 12l14 9 14-9-2 8-8 5h-8l-8-5z" fill="#e8392c" />
          <path d="M7 14l10-5 10 5-10 6z" fill="#f7a28a" />
          <path d="M12 13l5 3 5-3" stroke="#c32a22" strokeWidth="2" fill="none" />
          <path d="M13 25l4 3 4-3z" fill="#4d1010" />
        </svg>
      </TaskButton>
      <Tray>
        <button aria-label="Show hidden icons"><svg width="8" height="5"><path d="M0 5l4-4 4 4z" fill="#fff" /></svg></button>
        <svg width="16" height="16" viewBox="0 0 16 16"><path d="M1.500 1v14" stroke="#fff" strokeWidth="1.400" /><path d="M3 2h5l1 1.500h5.500V10H9L8 8.500H3z" fill="#fff" /></svg>
        <svg width="16" height="16" viewBox="0 0 16 16" fill="none" stroke="#fff" strokeWidth="1.200"><path d="M5.500 3.500h9v7h-9zM8 11v3M12 11v3M6 14.500h8M1 1h4v4H1zM3 5v9h3" /></svg>
        <svg width="16" height="16" viewBox="0 0 16 16">
          <path d="M1 5h3l4-4v14l-4-4H1z" fill="#fff" />
          <circle cx="11" cy="11" r="4.800" fill="#d4493c" /><path d="M9 9l4 4M13 9l-4 4" stroke="#fff" strokeWidth="1.400" />
        </svg>
        <Clock>6:35 AM<br />10/8/2025</Clock>
      </Tray>
    </Taskbar>
  );
}

export default function App() {
  return (
    <Desktop>
      <GlobalStyle />
      <BrowserChrome />
      <Page>
        <Scroller>
          <ScrollArrow aria-label="Scroll up"><Chevron up /></ScrollArrow>
          <ScrollThumb />
          <ScrollArrow aria-label="Scroll down"><Chevron /></ScrollArrow>
        </Scroller>
        <ExplorerWindow />
        <Pointer width="12" height="19" viewBox="0 0 12 19">
          <path d="M1 1v14.500l3.500-3.200 2.300 5.200 2.500-1.100L7 11.500h4.500z" fill="#fff" stroke="#111" />
        </Pointer>
      </Page>
      <WindowsTaskbar />
    </Desktop>
  );
}
